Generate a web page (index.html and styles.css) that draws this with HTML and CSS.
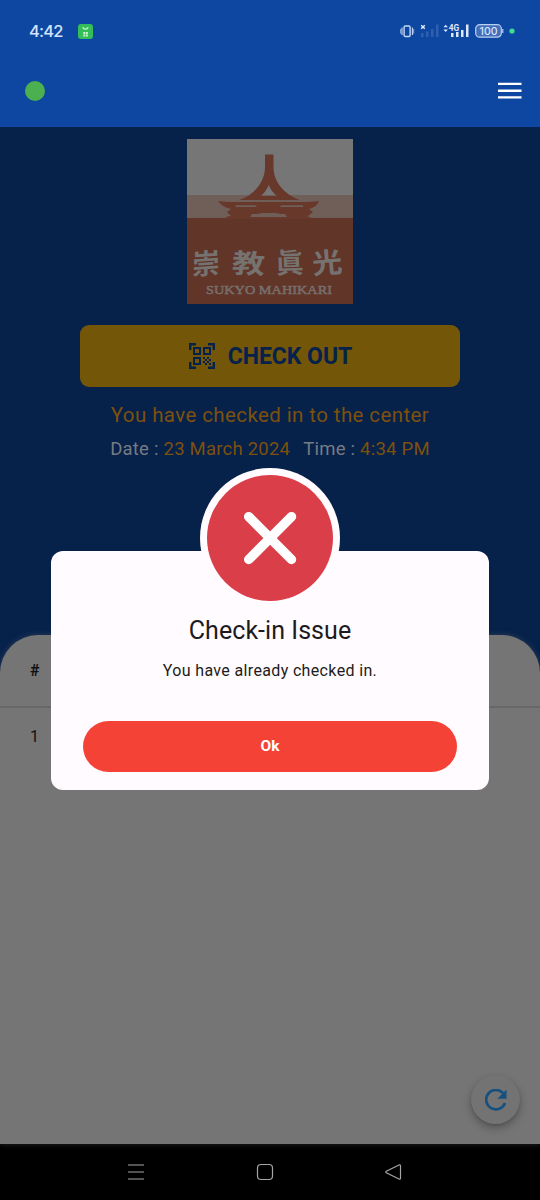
FILE: index.html
```html
<!DOCTYPE html>
<html lang="en">
<head>
<meta charset="utf-8">
<title>Check-in</title>
<link rel="stylesheet" href="styles.css">
</head>
<body>
<header class="top">
  <div class="status">
    <span class="clock">4:42</span>
    <svg class="bag" width="15" height="15" viewBox="0 0 15 15"><rect width="15" height="15" rx="3" fill="#35bd59"/><path d="M4.800 3.200a2.800 2.500 0 0 0 5.400 0" fill="none" stroke="#c9f5d4" stroke-width="1.200"/><path d="M5.300 8h2v2h-2zm2.600 0h2v2h-2zm-2.600 2.600h2v1.900h-2zm2.600 0h2v1.900h-2z" fill="#c9f5d4"/></svg>
    <svg class="signals" width="118" height="18" viewBox="0 0 118 18">
      <g fill="none" stroke="#c5d8f5"><rect x="4.100" y="4" width="6" height="10.500" rx="1.200" stroke-width="1.400"/><path d="M2 5.500v7.500M12.400 5.500v7.500" stroke-width="1.100"/><path d="M.6 7v4.500M13.700 7v4.500" stroke-width=".7"/></g>
      <path d="M21 11h2.500v4H21zm5-1.500h2.500v5.500H26zm5-2.500h2.500v8H31zm5-4.500h2.500v12.500H36z" fill="#2f60b0"/>
      <path d="m21.200 3.200 3.600 3.600m0-3.600-3.600 3.600" stroke="#e2edff" stroke-width="1.400"/>
      <path d="M51 11h2.500v4H51zm5-1h2.500v5H56zm5-2h2.500v7H61zm5-5.500h2.500V15H66z" fill="#dce8fd"/>
      <path d="M43.500 5.300 45.700 2.700l2.200 2.600zm0 2.200h4.400l-2.200 2.600z" fill="#dce8fd"/>
      <text x="48.800" y="9" class="net" textLength="10.500" lengthAdjust="spacingAndGlyphs">4G</text>
      <rect x="75.700" y="2.700" width="25.600" height="12.500" rx="4" fill="#426eb7" stroke="#b9cff2" stroke-width="1.200"/><path d="M102.800 7v4" stroke="#b9cff2" stroke-width="1.200"/>
      <text x="79.500" y="12.500" class="power" textLength="18" lengthAdjust="spacingAndGlyphs">100</text>
      <circle cx="112" cy="9" r="2.600" fill="#3ddc91"/>
    </svg>
  </div>
  <div class="appbar">
    <span class="online"></span>
    <svg width="24" height="18" viewBox="0 0 24 18"><path d="M0 1.900h23.500M0 8.700h23.500M0 15.400h23.500" stroke="#fff" stroke-width="2.400"/></svg>
  </div>
</header>

<main class="page">
  <svg class="logo" width="166" height="165" viewBox="0 0 166 165">
    <path fill="#767676" d="M0 0h166v165H0z"/>
    <path fill="#6f5f58" d="M0 56h166v24H0z"/>
    <path fill="#613528" d="M0 79h166v86H0z"/>
    <path fill="#68382a" fill-rule="evenodd" d="M78 15.500h8.500V29C87 43 97 55 112.500 61H52.500C68 55 77.500 43 78 29zM81.800 46C79 52 77 54 74 57h16c-4-3-6-6-8.200-11z"/>
    <path fill="#68382a" d="M31 62q7 1 18 1h65q11 0 18-1-2 6-10 8l4 3-5 4h-3q5 0 7 3H38q1-3 6-3l-4-4 4-3q-9-2-13-8z"/>
    <path fill="#6f5f58" d="M48 66.300h20l2 1.800H49zm46 0h22v1.800H93zM65 75h6q2-1 6-1h10q4 0 6 1h5l2 3H63z"/>
    <g class="kanji">
      <text transform="translate(19 135) rotate(-4) skewX(-4)">崇</text>
      <text transform="translate(61 134) rotate(3) scale(1.180 .95)">教</text>
      <text transform="translate(103 134) rotate(-2)">眞</text>
      <text transform="translate(141 134) rotate(-5) scale(1.080 1)">光</text>
    </g>
    <text class="brand" x="19" y="155" textLength="126" lengthAdjust="spacingAndGlyphs">SUKYO MAHIKARI</text>
  </svg>
  <div class="checkout">
    <svg width="26" height="26" viewBox="0 0 26 26"><g fill="none" stroke="#06214a"><path stroke-width="2.400" d="M1.200 7V1.200H7M19 1.200h5.800V7M1.200 19v5.800H7M19 24.800h5.800V19"/><path stroke-width="2" d="M5 5h6v6H5zm10 0h6v6h-6zM5 15h6v6H5z"/></g><path fill="#06214a" d="M14 14h2v2h-2zm4 0h2v2h-2zm-2 2h2v2h-2zm4 0h2v2h-2zm-6 2h2v2h-2zm4 0h2v2h-2zm-2 2h2v2h-2zm4 0h2v2h-2z"/></svg>
    <span>CHECK OUT</span>
  </div>
  <p class="message">You have checked in to the center</p>
  <div class="when"><span>Date : <b>23 March 2024</b></span><span>Time : <b>4:34 PM</b></span></div>
  <section class="sheet">
    <div class="head">#</div>
    <div class="row">1</div>
  </section>
  <div class="refresh"><svg width="22" height="22" viewBox="0 0 22 22"><path d="M18.100 4.200A9.700 9.700 0 1 0 20 14" fill="none" stroke="#15507f" stroke-width="2.700"/><path d="M21.500.5v9.200h-9.200z" fill="#15507f"/></svg></div>
  <div class="dialog">
    <svg class="fail" width="140" height="140" viewBox="0 0 140 140"><circle cx="70" cy="70" r="70" fill="#fffbfe"/><circle cx="70" cy="70" r="63" fill="#da3e49"/><path d="m48.700 48.700 42.800 42.800m0-42.800L48.700 91.500" stroke="#fff" stroke-width="9.500" stroke-linecap="round"/></svg>
    <h1>Check-in Issue</h1>
    <p>You have already checked in.</p>
    <div class="ok">Ok</div>
  </div>
</main>

<nav class="system">
  <svg width="18" height="18" viewBox="0 0 18 18"><path d="M1 2h16M1 9h16M1 16h16"/></svg>
  <svg width="18" height="18" viewBox="0 0 18 18"><rect x="1.500" y="1.500" width="15" height="15" rx="3.500"/></svg>
  <svg width="18" height="18" viewBox="0 0 18 18"><path d="M15 2 2.300 8.200q-1 .8 0 1.600L15 16q1.500.5 1.500-1V3q0-1.500-1.500-1z"/></svg>
</nav>
</body>
</html>
```
FILE: styles.css
```css
* { box-sizing: border-box; }
body {
  margin: 0;
  width: 540px;
  height: 1200px;
  overflow: hidden;
  display: flex;
  flex-direction: column;
  font-family: Roboto, sans-serif;
}
svg { display: block; flex: none; }
h1, p { margin: 0; }
.top { height: 127px; background: #0e47a1; }
.status {
  height: 62px;
  padding: 0 22px 0 29px;
  display: flex;
  align-items: center;
}
.clock { width: 49px; font: 500 16.5px Inter, sans-serif; color: #d3e3ff; letter-spacing: -.8px; }
.signals { margin-left: auto; }
.net { font: 700 9px Roboto, sans-serif; fill: #dce8fd; }
.power { font: 500 10px Inter, sans-serif; fill: #d7e5ff; }
.appbar {
  height: 58px;
  padding: 0 18px 0 25px;
  display: flex;
  align-items: center;
  justify-content: space-between;
}
.online { width: 20px; height: 20px; border-radius: 50%; background: #4caf50; }
.page {
  position: relative;
  height: 1017px;
  padding-top: 12px;
  display: flex;
  flex-direction: column;
  align-items: center;
  background: #06214a;
}
.kanji { font: 700 28px "Noto Sans CJK JP", sans-serif; fill: #767270; text-anchor: middle; }
.brand { font: 400 13.5px "Liberation Serif", serif; fill: #77706d; stroke: #77706d; stroke-width: .5px; }
.checkout {
  width: 380px;
  height: 62px;
  margin-top: 21px;
  padding-left: 1px;
  border-radius: 9px;
  background: #735607;
  display: flex;
  align-items: center;
  justify-content: center;
  gap: 13px;
  font-size: 23px;
  font-weight: 700;
  letter-spacing: -.05px;
  color: #06214a;
}
.message { margin-top: 15px; font-size: 20.5px; line-height: 26px; letter-spacing: .4px; color: #7d510d; }
.when {
  margin-top: 9px;
  display: flex;
  gap: 13px;
  font-size: 18.5px;
  line-height: 24px;
  letter-spacing: .23px;
  color: #777b82;
}
.when b { font-weight: 400; color: #7d510d; }
.sheet {
  width: 540px;
  height: 509px;
  margin-top: auto;
  border-radius: 38px 38px 0 0;
  background: #757575;
  box-shadow: 0 0 6px rgba(117, 117, 117, .35);
  font-size: 16px;
  color: #111;
}
.head { height: 73px; padding-left: 30px; line-height: 72px; border-bottom: 2px solid #676769; font-weight: 700; }
.row { padding-left: 30px; line-height: 58px; }
.refresh {
  position: absolute;
  left: 471px;
  top: 948px;
  width: 49px;
  height: 49px;
  border-radius: 50%;
  background: #737373;
  box-shadow: 0 4px 8px rgba(0, 0, 0, .28), 0 1px 2px rgba(0, 0, 0, .12);
  display: flex;
  align-items: center;
  justify-content: center;
}
.dialog {
  position: absolute;
  left: 51px;
  top: 424px;
  width: 438px;
  height: 239px;
  padding: 64px 32px 18px;
  border-radius: 12px;
  background: #fffbfe;
  text-align: center;
  color: #1d1b20;
}
.fail { position: absolute; left: 149px; top: -83px; }
.dialog h1 { font-size: 25px; font-weight: 400; line-height: 32px; letter-spacing: .05px; }
.dialog p { margin-top: 14px; font-size: 16px; line-height: 20px; letter-spacing: .35px; }
.ok {
  height: 51px;
  margin-top: 40px;
  border-radius: 26px;
  background: #f44336;
  color: #fff;
  font-size: 15.5px;
  font-weight: 700;
  line-height: 51px;
}
.system {
  height: 56px;
  padding: 0 138px 0 127px;
  background: #000;
  display: flex;
  align-items: center;
  justify-content: space-between;
}
.system svg { fill: none; stroke: #a5a5a5; stroke-width: 1.2; }
```
